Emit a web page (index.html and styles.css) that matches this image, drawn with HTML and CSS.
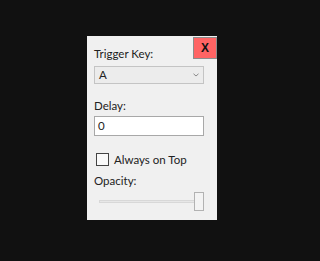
FILE: index.html
```html
<!DOCTYPE html>
<html>
<head>
<meta charset="utf-8">
<link rel="stylesheet" href="styles.css">
</head>
<body>
<div class="stage">
  <div class="panel">
    <div class="close">X</div>
    <div class="label first">Trigger Key:</div>
    <div class="combo">
      <span class="combo-text">A</span>
      <svg class="chev" width="6" height="4" viewBox="0 0 6 4"><path d="M0.5 0.8 L3 3 L5.5 0.8" fill="none" stroke="#8a8a8a" stroke-width="1"/></svg>
    </div>
    <div class="label delay">Delay:</div>
    <div class="textbox">0</div>
    <div class="check-row">
      <span class="checkbox"></span>
      <span class="check-label">Always on Top</span>
    </div>
    <div class="label opacity">Opacity:</div>
    <div class="slider">
      <div class="track"></div>
      <div class="thumb"></div>
    </div>
  </div>
</div>
</body>
</html>
```
FILE: styles.css
```css
html, body {
  margin: 0;
  padding: 0;
  background: #111111;
}
.stage {
  width: 300px;
  height: 261px;
  padding: 36px 0 0 87px;
  box-sizing: border-box;
}
.panel {
  position: relative;
  width: 130px;
  height: 184px;
  background: #f0f0f0;
  box-sizing: border-box;
  padding: 10px 0 0 7px;
  font-family: "Lato", "Noto Sans", sans-serif;
  font-size: 11.5px;
  color: #222;
}
.close {
  position: absolute;
  top: 1px;
  right: 0;
  width: 24px;
  height: 22px;
  box-sizing: border-box;
  background: #ff6464;
  border: 1px solid #8c8c8c;
  display: flex;
  align-items: center;
  justify-content: center;
  font-weight: bold;
  font-size: 12px;
  color: #111;
  font-family: "Liberation Sans", sans-serif;
}
.label {
  line-height: 16px;
  height: 16px;
}
.combo {
  margin-top: 4px;
  width: 110px;
  height: 18px;
  box-sizing: border-box;
  border: 1px solid #c4c4c4;
  background: #ececec;
  display: flex;
  align-items: center;
  justify-content: space-between;
  padding: 0 4px 0 4px;
  line-height: 16px;
}
.chev {
  display: block;
}
.delay {
  margin-top: 14px;
}
.textbox {
  margin-top: 2px;
  width: 110px;
  height: 20px;
  box-sizing: border-box;
  border: 1px solid #a8a8a8;
  background: #ffffff;
  padding: 0 3px;
  line-height: 18px;
}
.check-row {
  margin-top: 17px;
  display: flex;
  align-items: center;
  height: 13px;
  padding-left: 2px;
}
.checkbox {
  width: 13px;
  height: 13px;
  box-sizing: border-box;
  border: 1px solid #444;
  background: #fafafa;
}
.check-label {
  margin-left: 5px;
  line-height: 16px;
}
.opacity {
  margin-top: 7px;
}
.slider {
  position: relative;
  margin-top: 3px;
  width: 110px;
  height: 19px;
  display: flex;
  align-items: center;
}
.track {
  margin-left: 5px;
  width: 100px;
  height: 3px;
  box-sizing: border-box;
  background: #e7e7e7;
  border: 1px solid #d8d8d8;
}
.thumb {
  position: absolute;
  left: 100px;
  top: 0;
  width: 10px;
  height: 19px;
  box-sizing: border-box;
  background: #f3f3f3;
  border: 1px solid #b2b2b2;
}
```
